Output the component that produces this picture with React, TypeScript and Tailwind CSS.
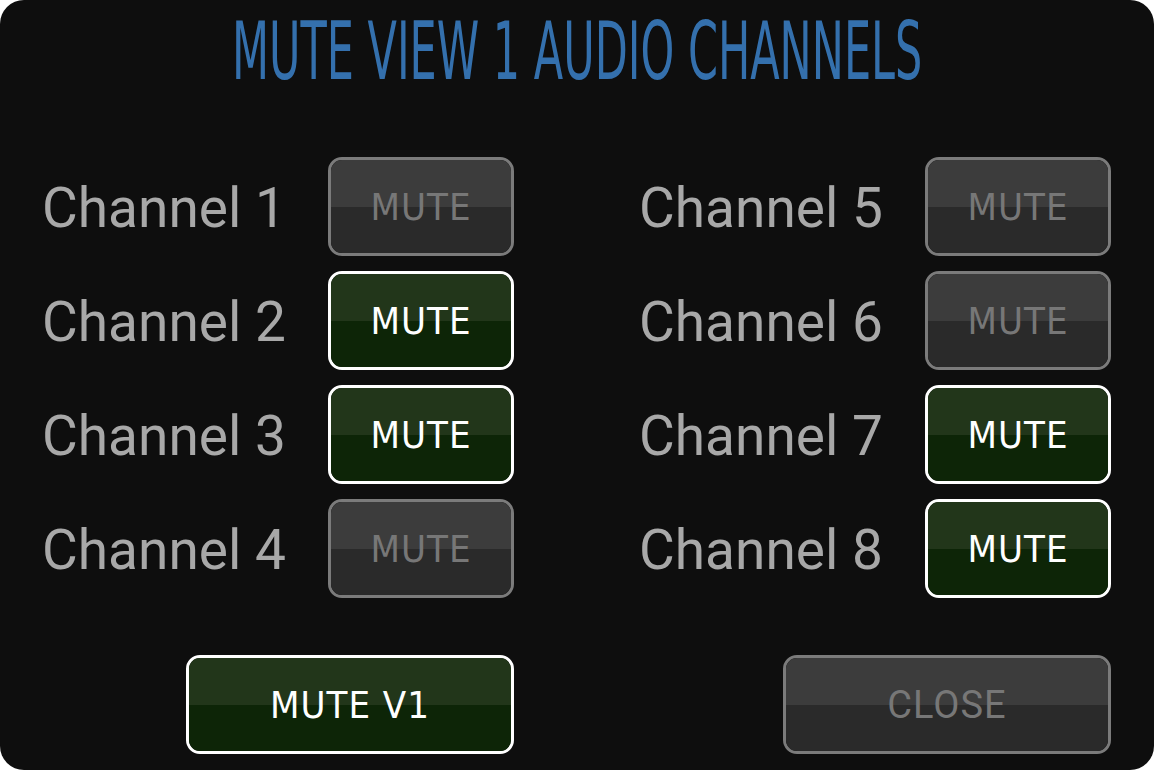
import { useState } from "react";

const labelFont = { fontFamily: '"Roboto", "Liberation Sans", sans-serif' };

function MuteButton({ label, active, onClick, wide = false, font = "dejavu" }: { label: string; active: boolean; onClick?: () => void; wide?: boolean; font?: "dejavu" | "din" }) {
  const face = font === "dejavu" ? "font-['DejaVu_Sans_Condensed',sans-serif]" : "font-['Roboto',sans-serif]";
  return (
    <button
      type="button"
      onClick={onClick}
      className={`relative flex h-[99px] ${wide ? "w-[328px]" : "w-[186px]"} shrink-0 flex-col overflow-hidden rounded-[14px] border-[3px] ${
        active ? "border-white" : "border-[#7b7b7b]"
      }`}
    >
      <div className={`h-1/2 w-full ${active ? "bg-[#22361a]" : "bg-[#3c3c3c]"}`} />
      <div className={`h-1/2 w-full ${active ? "bg-[#0d2507]" : "bg-[#2a2a2a]"}`} />
      <span
        className={`absolute inset-0 flex items-center justify-center pt-[2px] text-[38px] tracking-[1px] ${face} ${active ? "text-white" : "text-[#777777]"}`}
      >
        {label}
      </span>
    </button>
  );
}

export default function App() {
  const [muted, setMuted] = useState([false, true, true, false, false, false, true, true]);
  const [all, setAll] = useState(true);

  const toggle = (i: number) => setMuted((m) => m.map((v, j) => (j === i ? !v : v)));

  const column = (start: number) => (
    <div className="flex flex-col gap-[15px]">
      {[0, 1, 2, 3].map((k) => {
        const i = start + k;
        return (
          <div key={i} className="flex items-center justify-between">
            <span className="pt-[4px] text-[55px] leading-none text-[#a8a8a8]" style={labelFont}>
              Channel {i + 1}
            </span>
            <MuteButton label="MUTE" active={muted[i]} onClick={() => toggle(i)} />
          </div>
        );
      })}
    </div>
  );

  return (
    <div className="h-[770px] w-[1154px] bg-white">
      <main className="flex h-full w-full flex-col rounded-[24px] bg-[#0e0e0e]">
        <header className="flex h-[157px] justify-center pt-[8px]">
          <h1 className="inline-block origin-top scale-x-[0.597] whitespace-nowrap font-['DejaVu_Sans_Condensed',sans-serif] text-[80px] font-normal leading-[1.1] text-[#3470ad]">
            MUTE VIEW 1 AUDIO CHANNELS
          </h1>
        </header>

        <section className="grid grid-cols-2 gap-x-[125px] pl-[42px] pr-[43px]">
          {column(0)}
          {column(4)}
        </section>

        <footer className="mt-[57px] grid grid-cols-2 gap-x-[125px] pl-[42px] pr-[43px]">
          <div className="flex justify-end">
            <MuteButton label="MUTE V1" active={all} wide onClick={() => setAll(!all)} />
          </div>
          <div className="flex justify-end">
            <MuteButton label="CLOSE" active={false} wide font="din" />
          </div>
        </footer>
      </main>
    </div>
  );
}
